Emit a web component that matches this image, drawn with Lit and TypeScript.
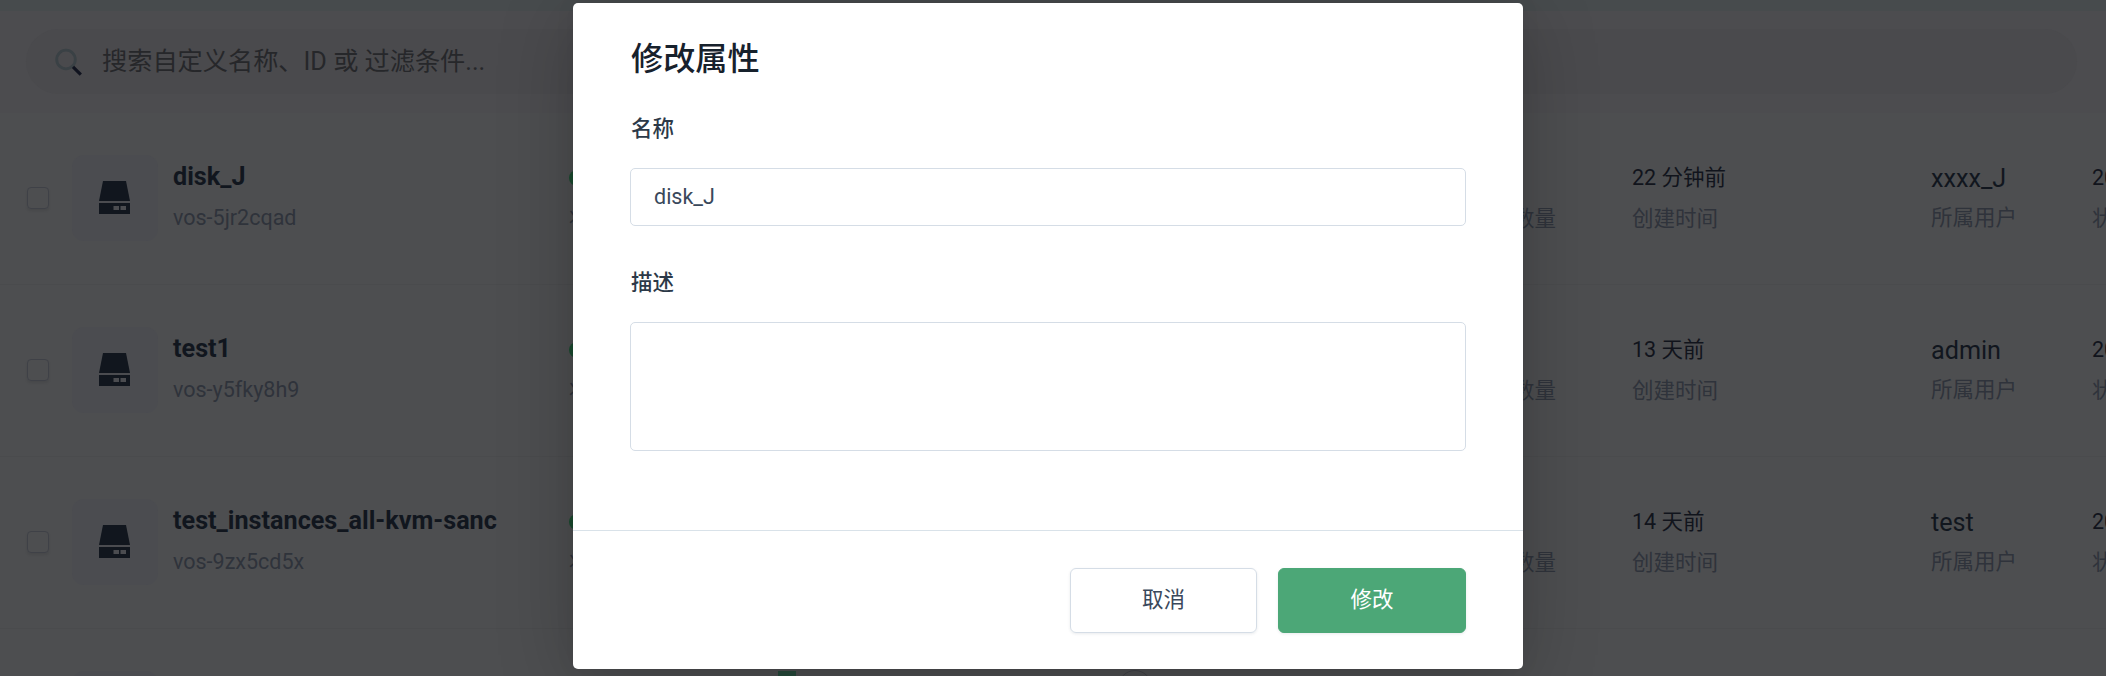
import { LitElement, html, css } from "lit";
import { customElement } from "lit/decorators.js";

interface Disk { name: string; id: string; created: string; owner: string; }

const DISKS: Disk[] = [
  { name: "disk_J", id: "vos-5jr2cqad", created: "22 分钟前", owner: "xxxx_J" },
  { name: "test1", id: "vos-y5fky8h9", created: "13 天前", owner: "admin" },
  { name: "test_instances_all-kvm-sanc", id: "vos-9zx5cd5x", created: "14 天前", owner: "test" },
  { name: "", id: "", created: "", owner: "" },
];

@customElement("disk-row")
export class DiskRow extends LitElement {
  static properties = { disk: { attribute: false } };
  declare disk: Disk;

  static styles = css`
    :host { display: block; height: 172px; box-sizing: border-box; border-bottom: 1px solid #4a4b4d; }
    .row {
      display: grid; grid-template-columns: 22px 109px 411px 944px 119px 299px 161px 100px;
      padding: 42px 0 0 27px; white-space: nowrap; color: #11141c;
    }
    .check {
      width: 22px; height: 22px; margin-top: 32px; box-sizing: border-box;
      border: 1px solid #3f4147; border-radius: 4px; box-shadow: 0 2px 3px rgba(0, 0, 0, .08);
    }
    .tile {
      width: 86px; height: 86px; margin-left: 23px; border-radius: 12px;
      background: #4b4c50; display: flex; align-items: center; justify-content: center;
    }
    .tile svg { display: block; margin: -1px 1px 0 0; }
    .cell { display: flex; flex-direction: column; }
    .main { margin-left: 15px; }
    .name { font-size: 25.2px; font-weight: 700; line-height: 32px; color: #11161e; margin-top: 6px; }
    .sub { font-size: 21.5px; line-height: 28px; color: #2f333b; margin-top: 11px; }
    .val { font-size: 21.5px; line-height: 28px; margin-top: 9px; }
    .val + .sub { margin-top: 13px; }
    .owner { font-size: 25.2px; line-height: 32px; margin-top: 8px; color: #11161e; }
    .owner + .sub { margin-top: 9px; }
    .dot { width: 16px; height: 16px; border-radius: 50%; background: #1a4a2f; margin: 15px 0 8px; }
  `;

  render() {
    const d = this.disk;
    return html`<div class="row">
      <div class="check"></div>
      <div class="tile">
        <svg width="31" height="33" viewBox="0 0 31 33">
          <path fill="#11161e" d="M4 0h23l4 20H0z"></path>
          <path fill="#11161e" fill-rule="evenodd" d="M0 22h31v11H0zM14.5 25v4h5.5v-4zM21.5 25v4h5.5v-4z"></path>
        </svg>
      </div>
      ${d.name
        ? html`
            <div class="cell main"><div class="name">${d.name}</div><div class="sub">${d.id}</div></div>
            <div class="cell"><div class="dot"></div><div class="sub">状态</div></div>
            <div class="cell"><div class="val">&nbsp;</div><div class="sub">数量</div></div>
            <div class="cell"><div class="val">${d.created}</div><div class="sub">创建时间</div></div>
            <div class="cell"><div class="owner">${d.owner}</div><div class="sub">所属用户</div></div>
            <div class="cell"><div class="val">20</div><div class="sub">状</div></div>`
        : ""}
    </div>`;
  }
}

@customElement("search-header")
export class SearchHeader extends LitElement {
  static styles = css`
    :host {
      display: block; height: 113px; box-sizing: border-box; border-top: 11px solid #474b4d;
      background: #4c4c4f; padding: 18px 29px 19px 26px;
    }
    .pill {
      height: 65px; border-radius: 33px; background: #4a4a4d; display: flex; align-items: center;
      padding-left: 29px; gap: 20px; font-size: 25.2px; line-height: 34px; color: #26272a;
    }
    svg { display: block; }
  `;
  render() {
    return html`<div class="pill">
      <svg width="27" height="28" viewBox="0 0 27 28" fill="none">
        <circle cx="11" cy="11.5" r="9.3" stroke="#3a4145" stroke-width="2.8"></circle>
        <path d="M18 18.8l7.8 7.8" stroke="#10131f" stroke-width="3.2"></path>
      </svg>
      <span>搜索自定义名称、ID 或 过滤条件...</span>
    </div>`;
  }
}

@customElement("edit-dialog")
export class EditDialog extends LitElement {
  static styles = css`
    :host {
      position: absolute; left: 573px; top: 3px; width: 950px; height: 666px; box-sizing: border-box;
      display: flex; flex-direction: column; background: #fff; border-radius: 5px; color: #324155;
      box-shadow: 0 13px 80px rgba(0, 0, 0, .2), 0 0 20px rgba(0, 0, 0, .06);
    }
    .body { flex: 1; padding: 34px 57px 0; display: flex; flex-direction: column; }
    h2 { margin: 0 0 0 1px; font-size: 32.2px; line-height: 44px; font-weight: 500; color: #17212c; }
    label { margin-left: 1px; font-size: 21.5px; line-height: 30px; font-weight: 500; color: #2c3948; }
    .name-label { margin-top: 33px; }
    .desc-label { margin-top: 42px; }
    .input, .area {
      box-sizing: border-box; border: 1px solid #d5dde6; border-radius: 5px; background: #fff;
    }
    .input { height: 58px; margin-top: 24px; padding: 0 23px; line-height: 56px; font-size: 21.5px; color: #3a485b; }
    .area { height: 129px; margin-top: 24px; }
    .foot {
      height: 139px; box-sizing: border-box; border-top: 1px solid #d9e2e9; padding: 37px 57px 0;
      display: flex; justify-content: flex-end; gap: 21px;
    }
    .btn {
      width: 187px; height: 65px; box-sizing: border-box; border-radius: 6px; text-align: center;
      font-size: 21.5px; line-height: 62px; border: 1px solid #d5dde6; color: #3a485b;
      box-shadow: 0 1px 3px rgba(40, 60, 80, .1);
    }
    .primary { width: 188px; background: #4ca777; border-color: #4ca777; color: #fff; }
  `;
  render() {
    return html`
      <div class="body">
        <h2>修改属性</h2>
        <label class="name-label">名称</label>
        <div class="input">disk_J</div>
        <label class="desc-label">描述</label>
        <div class="area"></div>
      </div>
      <div class="foot">
        <div class="btn">取消</div>
        <div class="btn primary">修改</div>
      </div>`;
  }
}

@customElement("app-root")
export class AppRoot extends LitElement {
  static styles = css`
    :host {
      display: block; position: relative; width: 2106px; height: 676px; overflow: hidden;
      background: #4d4e50; font-family: Roboto, "Noto Sans CJK SC", sans-serif;
    }
    .page-mark { position: absolute; left: 778px; top: 671px; width: 18px; height: 18px; background: #26493a; }
    .page-ring {
      position: absolute; left: 1118px; top: 670px; width: 34px; height: 34px; box-sizing: border-box;
      border: 1px solid #404146; border-radius: 50%;
    }
  `;
  render() {
    return html`
      <search-header></search-header>
      ${DISKS.map((d) => html`<disk-row .disk=${d}></disk-row>`)}
      <div class="page-mark"></div>
      <div class="page-ring"></div>
      <edit-dialog></edit-dialog>`;
  }
}
